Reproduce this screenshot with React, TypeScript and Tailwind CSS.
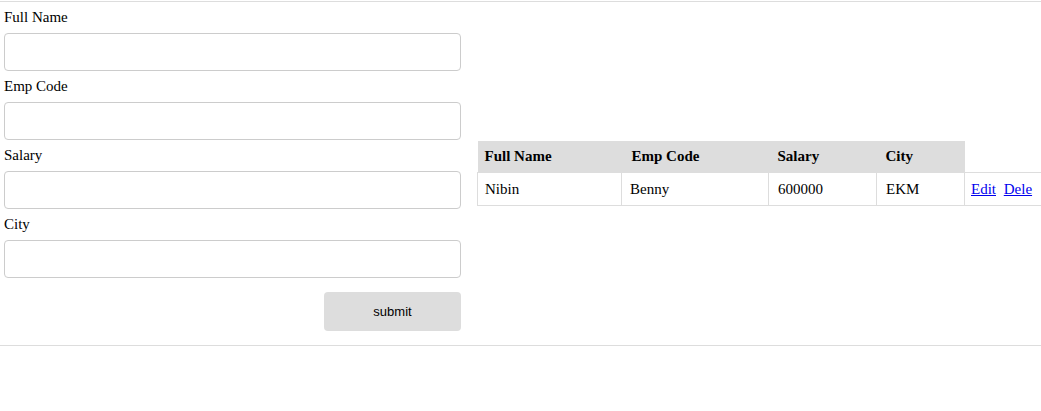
import React from "react";

const fields = ["Full Name", "Emp Code", "Salary", "City"];

export default function App() {
  return (
    <div className="w-[1041px] h-[411px] overflow-hidden bg-white text-black font-['Liberation_Serif',serif]">
      <div className="mt-px flex items-center border-t border-b border-[#dddddd]">
        <form className="w-[457px] ml-1 shrink-0 pt-[7px] pb-[14px] flex flex-col">
          {fields.map((f) => (
            <div key={f} className="flex flex-col">
              <label className="text-[15px] leading-[17px] mb-[7px]">{f}</label>
              <input
                type="text"
                className="h-[38px] w-full border border-[#cccccc] rounded-[4px] mb-[7px] outline-none"
              />
            </div>
          ))}
          <div className="flex justify-end mt-[7px]">
            <button
              type="button"
              className="w-[137px] h-[39px] bg-[#dddddd] rounded-[4px] font-['Liberation_Sans',sans-serif] text-[13px] text-black"
            >
              submit
            </button>
          </div>
        </form>
        <div className="ml-4 shrink-0">
          <table className="table-fixed border-collapse w-[600px] text-[15px] leading-[17px]">
            <colgroup>
              <col className="w-[144px]" />
              <col className="w-[147px]" />
              <col className="w-[108px]" />
              <col className="w-[88px]" />
              <col className="w-[113px]" />
            </colgroup>
            <thead>
              <tr>
                <th className="bg-[#dddddd] text-left font-bold h-[32px] pl-[7px] pr-2 py-0">Full Name</th>
                <th className="bg-[#dddddd] text-left font-bold h-[32px] pl-[10px] pr-2 py-0">Emp Code</th>
                <th className="bg-[#dddddd] text-left font-bold h-[32px] pl-[9px] pr-2 py-0">Salary</th>
                <th className="bg-[#dddddd] text-left font-bold h-[32px] pl-[9px] pr-2 py-0">City</th>
              </tr>
            </thead>
            <tbody>
              <tr>
                <td className="border border-[#dddddd] pl-[7px] pr-2 pt-2 pb-[7px]">Nibin</td>
                <td className="border border-[#dddddd] px-2 pt-2 pb-[7px]">Benny</td>
                <td className="border border-[#dddddd] pl-[9px] pr-2 pt-2 pb-[7px]">600000</td>
                <td className="border border-[#dddddd] pl-[9px] pr-2 pt-2 pb-[7px]">EKM</td>
                <td className="border border-[#dddddd] pl-[6px] pr-2 pt-2 pb-[7px] whitespace-nowrap">
                  <a href="#" className="text-[#0000ee] underline">Edit</a>{" "}
                  <a href="#" className="text-[#0000ee] underline ml-1">Dele</a>
                </td>
              </tr>
            </tbody>
          </table>
        </div>
      </div>
    </div>
  );
}
